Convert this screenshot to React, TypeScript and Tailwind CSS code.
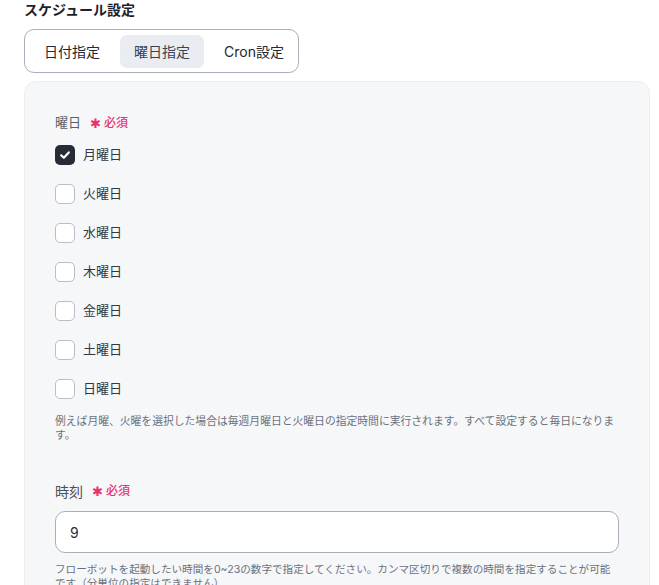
import { useState } from "react";

const DAYS = ["月曜日", "火曜日", "水曜日", "木曜日", "金曜日", "土曜日", "日曜日"];
const TABS = ["日付指定", "曜日指定", "Cron設定"];

function Required() {
  return (
    <span className="ml-[9px] inline-flex items-center gap-[3px] text-[12px] font-medium text-[#e8336a]">
      <span className="text-[13px] leading-none">✱</span>
      必須
    </span>
  );
}

function DayCheckbox({ label, checked, onToggle }: { label: string; checked: boolean; onToggle: () => void }) {
  return (
    <label className="flex h-[20px] cursor-pointer items-center gap-[8px]" onClick={onToggle}>
      {checked ? (
        <span className="flex h-[20px] w-[20px] items-center justify-center rounded-[5px] bg-[#262b36]">
          <svg width="12" height="12" viewBox="0 0 12 12" fill="none">
            <path d="M2.2 6.3 4.8 8.8 9.8 3.4" stroke="white" strokeWidth="2.2" strokeLinecap="round" strokeLinejoin="round" />
          </svg>
        </span>
      ) : (
        <span className="h-[20px] w-[20px] rounded-[5px] border border-[#b9bec8] bg-white" />
      )}
      <span className="text-[13px] text-[#333842]">{label}</span>
    </label>
  );
}

export default function App() {
  const [tab, setTab] = useState(1);
  const [checked, setChecked] = useState<boolean[]>([true, false, false, false, false, false, false]);

  return (
    <div className="min-h-[585px] bg-white pl-6 pr-[9px] pt-[1px] text-[#333842] [font-family:Inter,'Noto_Sans_CJK_JP',sans-serif]">
      <h2 className="text-[14px] font-bold leading-[18px] text-[#1f2329]">スケジュール設定</h2>

      {/* tab switch */}
      <div className="mt-[10px] inline-flex h-[44px] items-center gap-[6px] rounded-[10px] border border-[#a9aeb9] pl-[5px] pr-0">
        {TABS.map((t, i) => (
          <button
            key={t}
            onClick={() => setTab(i)}
            className={`h-[33px] rounded-[7px] px-[14px] text-[14px] ${
              tab === i ? "bg-[#e9ecf0] text-[#3b4150]" : "text-[#222730]"
            }`}
          >
            {t}
          </button>
        ))}
      </div>

      <div className="mt-[8px] rounded-xl border border-[#eceef1] bg-[#f6f7f9] px-[30px] pb-8 pt-[31px]">
        <div className="flex h-[20px] items-center text-[13px] text-[#5a606b]">
          曜日
          <Required />
        </div>

        <div className="mt-[12px] flex flex-col gap-[19px]">
          {DAYS.map((d, i) => (
            <DayCheckbox
              key={d}
              label={d}
              checked={checked[i]}
              onToggle={() => setChecked((c) => c.map((v, j) => (j === i ? !v : v)))}
            />
          ))}
        </div>

        <p className="mt-[16px] text-[10.8px] leading-[14px] text-[#6b717c]">
          例えば月曜、火曜を選択した場合は毎週月曜日と火曜日の指定時間に実行されます。すべて設定すると毎日になります。
        </p>

        <div className="mt-[38px] flex h-[20px] items-center text-[14px] text-[#4a505b]">
          時刻
          <Required />
        </div>

        <input
          defaultValue="9"
          className="mt-[10px] h-[42px] w-full rounded-[10px] border border-[#a9aeb9] bg-white px-[14px] text-[14px] text-[#2a2f38] outline-none"
        />

        <p className="mt-[10px] text-[10.6px] leading-[14px] text-[#6b717c]">
          フローボットを起動したい時間を0~23の数字で指定してください。カンマ区切りで複数の時間を指定することが可能です（分単位の指定はできません）
        </p>
      </div>
    </div>
  );
}
